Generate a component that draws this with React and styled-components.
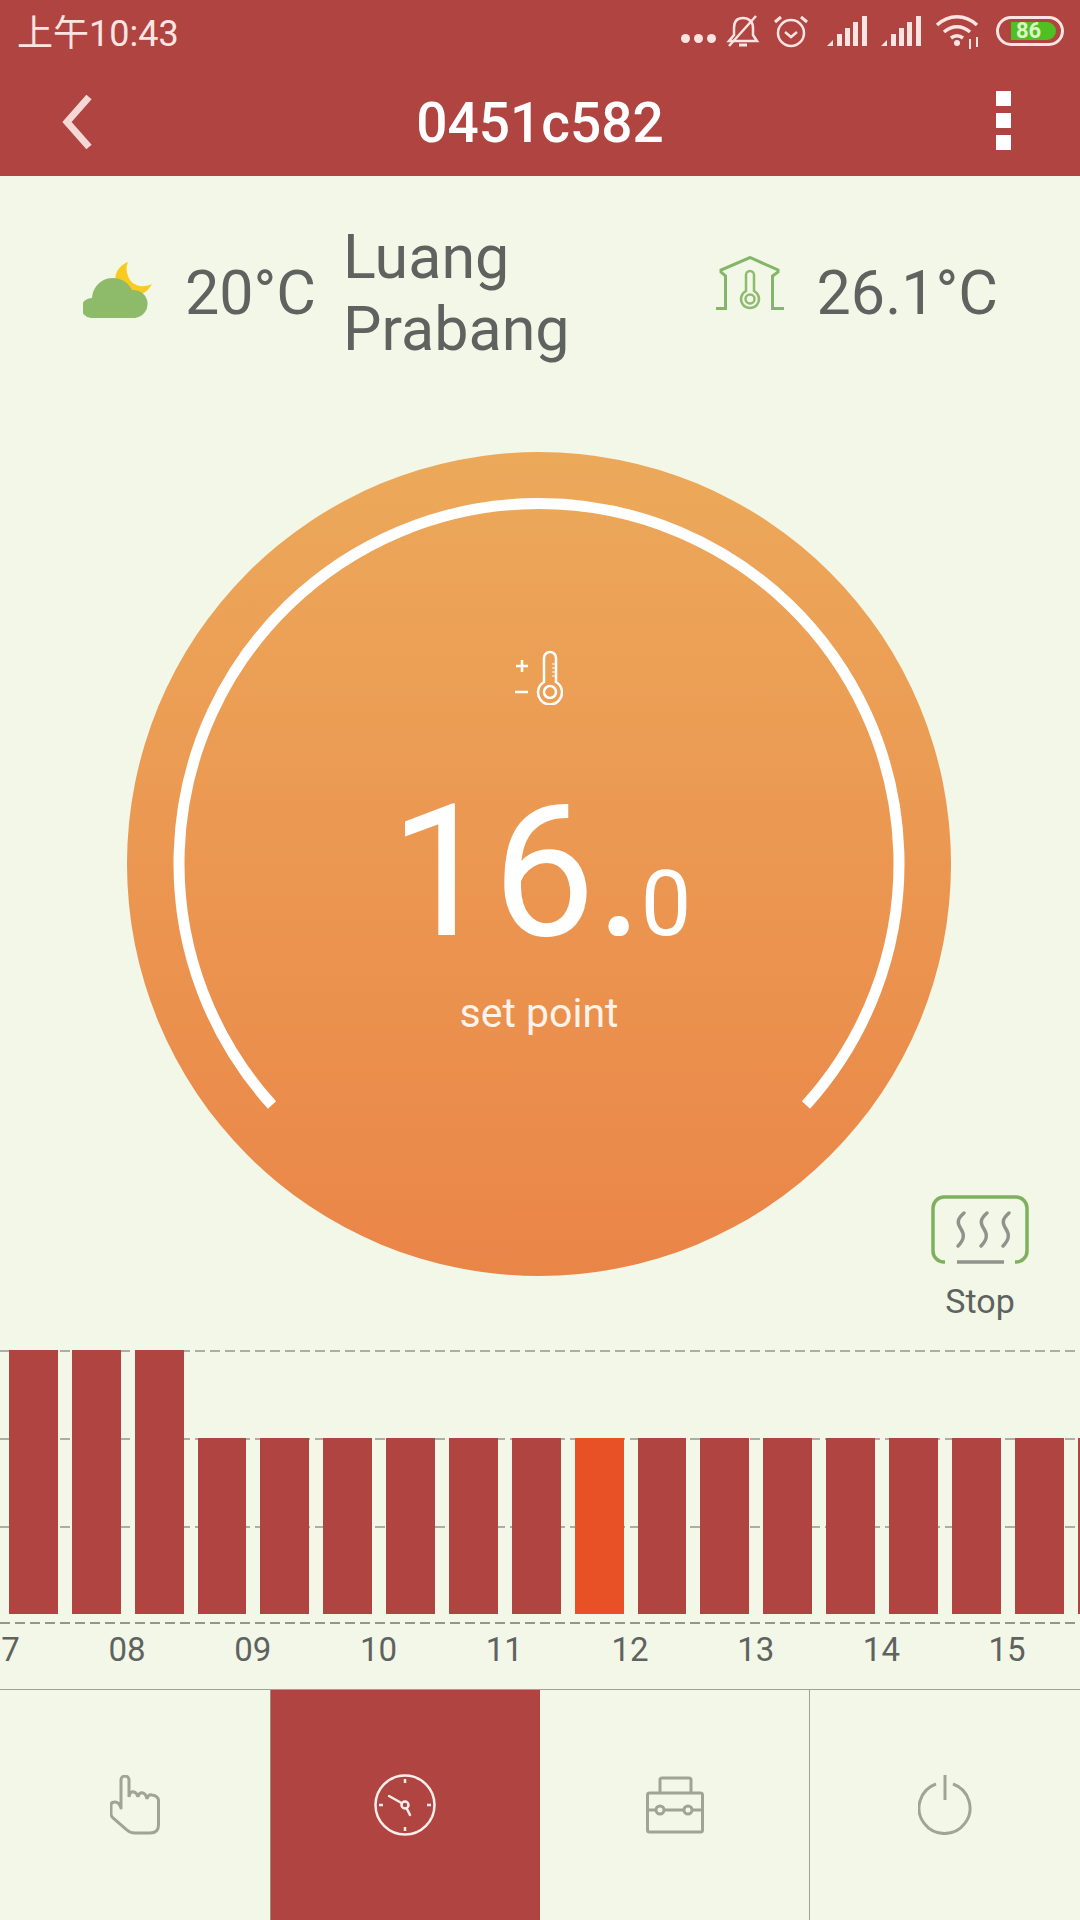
import React from "react";
import styled, { createGlobalStyle } from "styled-components";

const RED = "#b04440";
const BG = "#f3f7e7";
const TEXT = "#5f635f";
const PALE = "#fbe4e2";
const ICON_GREY = "#9fa497";
const GREEN = "#84b669";

const BAR_COUNT = 18;
const ACTIVE_BAR = 9;
const HOURS = ["07", "08", "09", "10", "11", "12", "13", "14", "15"];

export default function App() {
  return (
    <>
      <GlobalStyle />
      <Page>
        <Header>
          <StatusBar>
            <Clock>上午10:43</Clock>
            <StatusIcons>
              <Dots>
                <i />
                <i />
                <i />
              </Dots>
              <BellOff />
              <Alarm />
              <Signal />
              <Signal />
              <Wifi />
              <Battery>
                <BatteryFill>86</BatteryFill>
              </Battery>
            </StatusIcons>
          </StatusBar>
          <Toolbar>
            <svg width="31" height="56" viewBox="0 0 31 56">
              <path d="M27 2 L5 27 L27 52" fill="none" stroke="#f3d8d6" strokeWidth="7" />
            </svg>
            <Title>0451c582</Title>
            <MoreMenu>
              <i />
              <i />
              <i />
            </MoreMenu>
          </Toolbar>
        </Header>

        <Weather>
          <WeatherIcon $lift={6}>
            <CloudMoon />
          </WeatherIcon>
          <Temp>20°C</Temp>
          <City>Luang Prabang</City>
          <Indoor>
            <WeatherIcon $lift={20}>
              <HouseThermo />
            </WeatherIcon>
            <Temp>26.1°C</Temp>
          </Indoor>
        </Weather>

        <DialSection>
          <Dial>
            <DialArc viewBox="0 0 824 824">
              <path
                d="M145 653 A360 360 0 1 1 679 653"
                fill="none"
                stroke="#fff"
                strokeWidth="11"
              />
            </DialArc>
            <SetIcon />
            <Reading>
              16.<small>0</small>
            </Reading>
            <DialLabel>set point</DialLabel>
          </Dial>
          <StopButton>
            <HeatIcon />
            <span>Stop</span>
          </StopButton>
        </DialSection>

        <Chart>
          <GridLine $top={0} />
          <GridLine $top={88} />
          <GridLine $top={176} />
          <GridLine $top={272} $dark />
          <Bars>
            {Array.from({ length: BAR_COUNT }).map((_, i) => (
              <Bar key={i} $high={i < 3} $active={i === ACTIVE_BAR} />
            ))}
          </Bars>
        </Chart>

        <Hours>
          {HOURS.map((h) => (
            <Hour key={h}>{h}</Hour>
          ))}
        </Hours>

        <Nav>
          <NavItem>
            <HandIcon />
          </NavItem>
          <NavItem $active>
            <ClockIcon />
          </NavItem>
          <NavItem>
            <ToolboxIcon />
          </NavItem>
          <NavItem $last>
            <PowerIcon />
          </NavItem>
        </Nav>
      </Page>
    </>
  );
}

function BellOff() {
  return (
    <svg width="34" height="34" viewBox="0 0 34 34" fill="none" stroke={PALE} strokeWidth="2.5">
      <path d="M3 27 H31 L27 21 V14 C27 8 23 4 17 4 C11 4 8 8 8 14 V21 Z" />
      <path d="M13 31 H21" strokeWidth="3" />
      <path d="M3 32 L30 2" />
    </svg>
  );
}

function Alarm() {
  return (
    <svg width="41" height="34" viewBox="0 0 41 34" fill="none" stroke={PALE} strokeWidth="2.5">
      <circle cx="18" cy="19" r="13" />
      <path d="M12 18 L18 23 L24 18" />
      <path d="M2 8 L8 3 M34 8 L28 3" strokeWidth="3" />
    </svg>
  );
}

function Signal() {
  return (
    <svg width="41" height="30" viewBox="0 0 41 30" fill={PALE}>
      <path d="M0 30 L6 24 V30 Z" />
      <rect x="10" y="18" width="5" height="12" />
      <rect x="18" y="12" width="5" height="18" />
      <rect x="26" y="6" width="5" height="24" />
      <rect x="35" y="0" width="5" height="30" />
    </svg>
  );
}

function Wifi() {
  return (
    <svg width="48" height="36" viewBox="0 0 48 36" fill="none" stroke={PALE} strokeWidth="3.5">
      <path d="M2 12 C14 1 30 1 42 12" />
      <path d="M9 19 C17 12 27 12 35 19" />
      <path d="M16 25 C20 22 24 22 28 25" />
      <circle cx="22" cy="30" r="3" fill={PALE} stroke="none" />
      <path d="M35 36 V26 M42 24 V34" strokeWidth="2" />
    </svg>
  );
}

function CloudMoon() {
  return (
    <svg width="70" height="58" viewBox="0 0 70 58" fill="#8dbb6a">
      <path
        d="M45 1 C32 6 28 20 38 30 C48 38 62 36 69 23 C58 28 48 24 45 15 C43 10 43 5 45 1 Z"
        fill="#f8cb1e"
      />
      <path d="M8 57 A10 10 0 0 1 9 37 A21 21 0 0 1 49 29 A14 14 0 0 1 52 57 Z" />
    </svg>
  );
}

function HouseThermo() {
  return (
    <svg width="70" height="54" viewBox="0 0 70 54" fill="none" stroke={GREEN} strokeWidth="3">
      <path d="M1 52.5 H10.5 V20 L6 16 V14 L35 1.5 L63 14 V16 L57.5 20 V52.5 H69" />
      <path d="M31 35 V19 A4 4 0 0 1 39 19 V35 A9 9 0 1 1 31 35 Z" stroke="#8ebc6e" strokeWidth="2.5" />
      <circle cx="35" cy="43" r="4.5" stroke="#8ebc6e" strokeWidth="2.5" />
    </svg>
  );
}

function SetIcon() {
  return (
    <SetSvg width="50" height="55" viewBox="0 0 50 55" fill="none" stroke="#fff" strokeWidth="2.5">
      <path d="M3 16 H15 M9 10 V22" />
      <path d="M2 42 H15" />
      <path d="M31 32 V8 A6 6 0 0 1 43 8 V32 A12 12 0 1 1 31 32 Z" />
      <circle cx="37" cy="42" r="6" />
      <path d="M39 14 H42 M39 18 H42 M39 22 H42 M39 26 H42" strokeWidth="1" />
    </SetSvg>
  );
}

function HeatIcon() {
  const wave = "c-7 6 -7 10 -3 16 c4 6 3 11 -3 17";
  return (
    <svg width="98" height="70" viewBox="0 0 98 70" fill="none">
      <path
        d="M14 67 H13 A11 11 0 0 1 2 56 V13 A11 11 0 0 1 13 2 H85 A11 11 0 0 1 96 13 V56 A11 11 0 0 1 85 67 H84"
        stroke="#7fb05f"
        strokeWidth="3.5"
      />
      <path d="M26 67 H73" stroke="#8f938c" strokeWidth="3.5" />
      <path d={`M33 18 ${wave} M56 18 ${wave} M78 18 ${wave}`} stroke="#8f938c" strokeWidth="3.5" strokeLinecap="round" />
    </svg>
  );
}

function HandIcon() {
  return (
    <svg width="50" height="60" viewBox="0 0 50 60" fill="none" stroke={ICON_GREY} strokeWidth="3" strokeLinecap="round">
      <path d="M11 33 V5 A4 4 0 0 1 19 5 V22 Q20 16 24 17 Q27 18 28 22 Q29 17 33 18 Q36 19 37 24 Q38 19 42 20 Q48 21 48.5 25 V50 Q48.5 58 40 58 H25 Q20 58 17 55 L3 43 Q1 41 1 39 V30 Q1 27 5 27 Q9 27 11 33" />
    </svg>
  );
}

function ClockIcon() {
  return (
    <svg width="62" height="62" viewBox="0 0 62 62" fill="none" stroke="#fbeeec" strokeWidth="2.5">
      <circle cx="31" cy="31" r="29.5" />
      <path d="M31 5 V9 M31 53 V57 M5 31 H9 M53 31 H57" />
      <circle cx="31" cy="31" r="3.5" />
      <path d="M15 22 L27.5 29 M33 35 L36 41" strokeWidth="2.5" strokeLinecap="round" />
    </svg>
  );
}

function ToolboxIcon() {
  return (
    <svg width="58" height="58" viewBox="0 0 58 58" fill="none" stroke={ICON_GREY} strokeWidth="3">
      <rect x="1.5" y="17" width="55" height="39" rx="2" />
      <path d="M14 17 V4 Q14 2 16 2 H43 Q45 2 45 4 V17" />
      <path d="M2 34 H10 M18 34 H38 M46 34 H56" />
      <circle cx="14" cy="34" r="4" />
      <circle cx="42" cy="34" r="4" />
    </svg>
  );
}

function PowerIcon() {
  return (
    <svg width="54" height="60" viewBox="0 0 54 60" fill="none" stroke={ICON_GREY} strokeWidth="3">
      <path d="M18 9 A25.5 25.5 0 1 0 35 9" />
      <path d="M27 0 V25" />
    </svg>
  );
}

const GlobalStyle = createGlobalStyle`
  html, body {
    margin: 0;
    padding: 0;
    background: ${BG};
  }
  * {
    box-sizing: border-box;
  }
`;

const Page = styled.div`
  width: 1080px;
  height: 1920px;
  overflow: hidden;
  background: ${BG};
  font-family: Roboto, "Noto Sans CJK SC", sans-serif;
  color: ${TEXT};
`;

const Header = styled.header`
  height: 176px;
  background: ${RED};
`;

const StatusBar = styled.div`
  height: 70px;
  padding: 0 16px 8px 17px;
  display: flex;
  align-items: center;
  justify-content: space-between;
`;

const Clock = styled.span`
  font-size: 36px;
  margin-bottom: 2px;
  color: ${PALE};
`;

const StatusIcons = styled.div`
  display: flex;
  align-items: center;
  gap: 13px;
`;

const Dots = styled.div`
  display: flex;
  gap: 4px;
  margin-top: 14px;
  margin-right: -3px;

  i {
    width: 9px;
    height: 9px;
    border-radius: 50%;
    background: ${PALE};
  }
`;

const Battery = styled.div`
  width: 68px;
  height: 30px;
  padding: 3px 5px 3px 12px;
  border: 3px solid ${PALE};
  border-radius: 15px;
`;

const BatteryFill = styled.div`
  height: 100%;
  background: #4fbf22;
  border-radius: 0 10px 10px 0;
  color: #dcf6c6;
  font-size: 22px;
  font-weight: 700;
  line-height: 18px;
  padding-left: 5px;
`;

const Toolbar = styled.div`
  height: 106px;
  padding: 0 62px;
  display: grid;
  grid-template-columns: 1fr auto 1fr;
  align-items: center;
`;

const Title = styled.h1`
  margin: 0;
  font-size: 55px;
  font-weight: 500;
  color: #fff;
`;

const MoreMenu = styled.div`
  justify-self: end;
  margin: 0 7px 5px 0;
  display: flex;
  flex-direction: column;
  gap: 7px;

  i {
    width: 15px;
    height: 15px;
    background: #fff;
  }
`;

const Weather = styled.section`
  height: 276px;
  padding: 45px 82px 87px 83px;
  display: flex;
  align-items: center;
`;

const WeatherIcon = styled.div`
  display: flex;
  margin-bottom: ${(p) => p.$lift}px;
`;

const Temp = styled.span`
  margin-left: 32px;
  font-size: 61px;
  line-height: 72px;
  white-space: nowrap;
`;

const City = styled.div`
  width: 240px;
  margin-left: 27px;
  font-size: 61px;
  line-height: 72px;
`;

const Indoor = styled.div`
  margin-left: auto;
  display: flex;
  align-items: center;
`;

const DialSection = styled.section`
  position: relative;
  height: 898px;
  padding-left: 127px;
`;

const Dial = styled.div`
  position: relative;
  width: 824px;
  height: 824px;
  padding-top: 198px;
  border-radius: 50%;
  background: linear-gradient(180deg, #eca95a 0%, #ea8548 100%);
  display: flex;
  flex-direction: column;
  align-items: center;
  color: #fff;
`;

const DialArc = styled.svg`
  position: absolute;
  inset: 0;
  width: 824px;
  height: 824px;
  filter: blur(0.6px);
`;

const SetSvg = styled.svg`
  display: block;
  margin-left: -3px;
`;

const Reading = styled.div`
  margin-top: 76px;
  padding-left: 3px;
  font-size: 183px;
  line-height: 183px;
  white-space: nowrap;

  small {
    margin-left: -3px;
    font-size: 90px;
    line-height: 1;
  }
`;

const DialLabel = styled.div`
  margin-top: 27px;
  font-size: 41px;
  line-height: 44px;
  color: #fdf3ea;
`;

const StopButton = styled.div`
  position: absolute;
  top: 743px;
  right: 51px;
  display: flex;
  flex-direction: column;
  align-items: center;
  gap: 16px;
  font-size: 34px;
  line-height: 40px;
`;

const Chart = styled.section`
  position: relative;
  height: 273px;
`;

const GridLine = styled.div`
  position: absolute;
  left: 0;
  right: 0;
  top: ${(p) => p.$top}px;
  height: 2px;
  background: repeating-linear-gradient(
    90deg,
    ${(p) => (p.$dark ? "#92968b" : "#abafa1")} 0 10px,
    transparent 10px 15px
  );
`;

const Bars = styled.div`
  position: relative;
  height: 264px;
  padding-left: 9px;
  display: flex;
  align-items: flex-end;
  gap: 14px;
`;

const Bar = styled.div`
  flex: 0 0 48.87px;
  height: ${(p) => (p.$high ? 264 : 176)}px;
  background: ${(p) => (p.$active ? "#e85126" : RED)};
`;

const Hours = styled.div`
  height: 66px;
  margin-left: -61.5px;
  display: flex;
  align-items: center;
`;

const Hour = styled.span`
  flex: 0 0 125.73px;
  text-align: center;
  font-size: 33px;
  padding-bottom: 14px;
`;

const Nav = styled.nav`
  height: 231px;
  display: grid;
  grid-template-columns: repeat(4, 270px);
  border-top: 1px solid #9da394;
`;

const NavItem = styled.div`
  display: flex;
  align-items: center;
  justify-content: center;
  background: ${(p) => (p.$active ? RED : "transparent")};
  box-shadow: ${(p) => (p.$active ? "inset 1px 0 #a08a80" : "none")};
  border-right: ${(p) => (p.$last || p.$active ? "none" : "1px solid #9da394")};

  &:nth-child(1) {
    border-right: none;
  }
`;
